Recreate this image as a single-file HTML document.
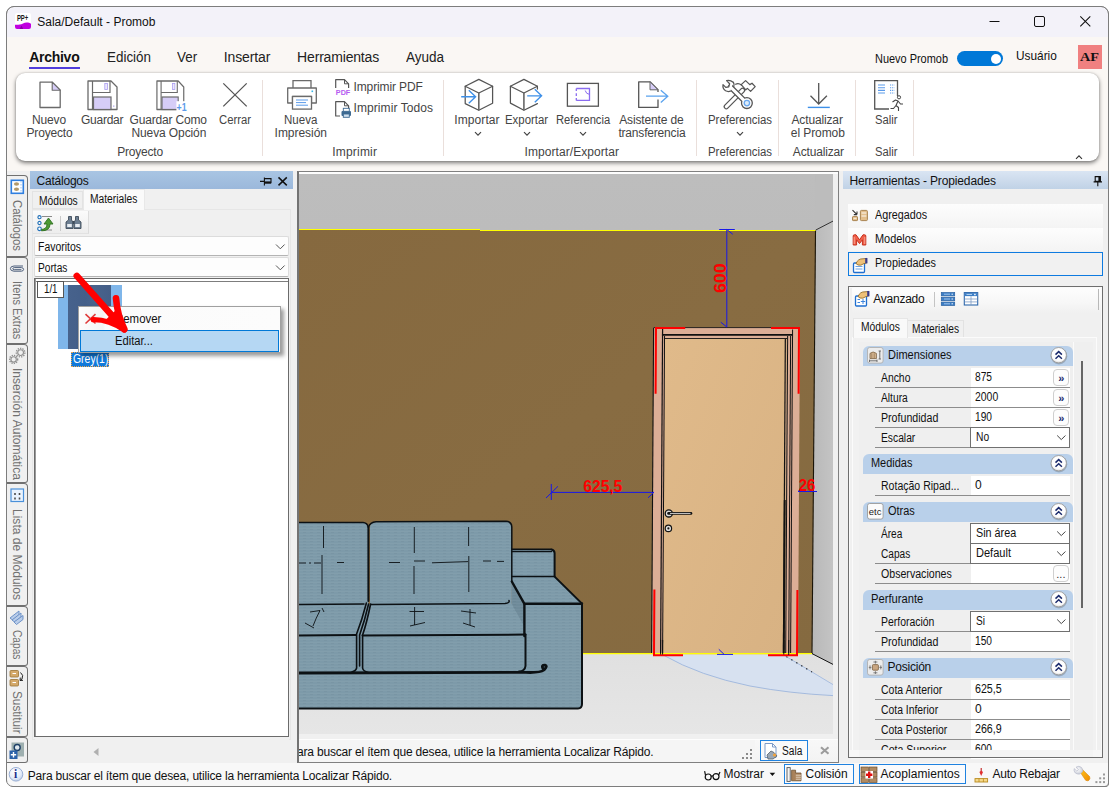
<!DOCTYPE html>
<html lang="es"><head><meta charset="utf-8"><title>Sala/Default - Promob</title>
<style>
html,body{margin:0;padding:0;background:#fff;}
body{width:1117px;height:797px;overflow:hidden;position:relative;font-family:"Liberation Sans",sans-serif;}
#app{position:absolute;left:0;top:0;width:1117px;height:797px;overflow:hidden;}
#app div,#app span.t,#app svg{position:absolute;box-sizing:border-box;}
span.t{white-space:pre;display:block;line-height:1;font-family:"Liberation Sans",sans-serif;font-weight:400;}

</style></head><body><div id="app">
<div id="win" style="left:6px;top:6px;width:1103px;height:781px;border:1px solid #7d7d7d;border-radius:8px 8px 2px 8px;background:#f0f0f0;overflow:hidden;"></div>
<div style="left:7px;top:7px;width:1101px;height:30px;background:#f3f2f9;border-radius:7px 7px 0 0;"></div>
<div style="left:7px;top:37px;width:1101px;height:134px;background:#faf7f4;"></div>
<svg style="left:15px;top:13px;" width="16" height="16" viewBox="0 0 16 16"><rect x="0" y="0" width="16" height="16" rx="2" fill="#fff"/><path d="M0 11.8 C3 12 5.5 11.6 8 10.4 C10.5 9.2 14 9.4 16 10.8 V14 Q16 16 14 16 H2 Q0 16 0 14 Z" fill="#c000e0"/><path d="M4.5 16L6.6 12.4L8.2 16Z" fill="#8a00a8"/><text x="1.9" y="8.2" font-family="Liberation Sans, sans-serif" font-weight="700" font-size="9" fill="#1a1a1a" textLength="11.4" lengthAdjust="spacingAndGlyphs">PP+</text></svg>
<span class="t" style="left:37.20px;top:16.44px;font-size:12px;color:#111;letter-spacing:0.012px;">Sala/Default - Promob</span>
<svg style="left:985px;top:10px;" width="110" height="22" viewBox="0 0 110 22"><path d="M4.5 11.5H14.5" stroke="#111" stroke-width="1" fill="none"/><rect x="49.5" y="6.5" width="10" height="10" rx="1.5" stroke="#111" stroke-width="1" fill="none"/><path d="M95.3 6.3L105.3 16.3M105.3 6.3L95.3 16.3" stroke="#111" stroke-width="1.05" fill="none"/></svg>
<span class="t" style="left:29.20px;top:50.15px;font-size:14px;color:#111;font-weight:700;letter-spacing:-0.271px;">Archivo</span>
<div style="left:29px;top:67px;width:51px;height:2px;background:#4f3ddc;"></div>
<span class="t" style="left:106.50px;top:50.15px;font-size:14px;color:#222;transform-origin:0 0;transform:scaleX(0.9582);">Edición</span>
<span class="t" style="left:177.20px;top:50.15px;font-size:14px;color:#222;transform-origin:0 0;transform:scaleX(0.9565);">Ver</span>
<span class="t" style="left:223.80px;top:50.15px;font-size:14px;color:#222;letter-spacing:-0.137px;">Insertar</span>
<span class="t" style="left:297.10px;top:50.15px;font-size:14px;color:#222;letter-spacing:-0.175px;">Herramientas</span>
<span class="t" style="left:406.20px;top:50.15px;font-size:14px;color:#222;transform-origin:0 0;transform:scaleX(0.9659);">Ayuda</span>
<span class="t" style="left:875.00px;top:52.84px;font-size:12px;color:#111;transform-origin:0 0;transform:scaleX(0.9120);">Nuevo Promob</span>
<div style="left:957px;top:51px;width:46px;height:15px;background:#0078d7;border-radius:8px;"></div>
<div style="left:990.5px;top:53.5px;width:10px;height:10px;background:#fff;border-radius:5px;"></div>
<span class="t" style="left:1015.50px;top:49.30px;font-size:13px;color:#111;transform-origin:0 0;transform:scaleX(0.9108);">Usuário</span>
<div style="left:1078px;top:45px;width:24px;height:24px;background:#f08080;"></div>
<span class="t" style="left:1080.30px;top:50.11px;font-size:13px;color:#111;font-weight:700;font-family:'Liberation Serif',serif;transform-origin:0 0;transform:scaleX(1.0964);">AF</span>
<div style="left:16px;top:73px;width:1083px;height:88px;background:#fff;border-radius:9px;box-shadow:0 2px 4px rgba(0,0,0,.5),0 0 2px rgba(0,0,0,.2);"></div>
<div style="left:262px;top:80px;width:1px;height:76px;background:#eadfdb;"></div>
<div style="left:443px;top:80px;width:1px;height:76px;background:#eadfdb;"></div>
<div style="left:696px;top:80px;width:1px;height:76px;background:#eadfdb;"></div>
<div style="left:778px;top:80px;width:1px;height:76px;background:#eadfdb;"></div>
<div style="left:855px;top:80px;width:1px;height:76px;background:#eadfdb;"></div>
<div style="left:913px;top:80px;width:1px;height:76px;background:#eadfdb;"></div>
<span class="t" style="left:31.90px;top:113.54px;font-size:12px;color:#444;letter-spacing:-0.122px;">Nuevo</span>
<span class="t" style="left:26.50px;top:126.74px;font-size:12px;color:#444;letter-spacing:-0.165px;">Proyecto</span>
<span class="t" style="left:81.00px;top:113.54px;font-size:12px;color:#444;letter-spacing:-0.254px;">Guardar</span>
<span class="t" style="left:129.50px;top:113.54px;font-size:12px;color:#444;letter-spacing:-0.170px;">Guardar Como</span>
<span class="t" style="left:131.50px;top:126.74px;font-size:12px;color:#444;letter-spacing:-0.113px;">Nueva Opción</span>
<span class="t" style="left:219.20px;top:113.54px;font-size:12px;color:#444;transform-origin:0 0;transform:scaleX(0.9411);">Cerrar</span>
<span class="t" style="left:117.20px;top:146.24px;font-size:12px;color:#444;letter-spacing:-0.194px;">Proyecto</span>
<svg style="left:36px;top:78px;" width="28" height="34" viewBox="0 0 28 34"><path d="M4 4.2H16.2L24.2 12.2V29.5H4Z" fill="#fff" stroke="#6a6a6a" stroke-width="1.3" stroke-linejoin="round"/><path d="M16.2 4.2V12.2H24.2Z" fill="#d6cdf7" stroke="#6a6a6a" stroke-width="1.1" stroke-linejoin="round"/></svg>
<svg style="left:87px;top:80px;" width="32" height="32" viewBox="0 0 32 32"><path d="M1 1H24L30 7V29.5H1Z" fill="#fff" stroke="#6a6a6a" stroke-width="1.3" stroke-linejoin="round"/><path d="M5.5 1V29.5" stroke="#6a6a6a" stroke-width="1.2"/><path d="M5.5 12.5H23V1" fill="none" stroke="#6a6a6a" stroke-width="1.2"/><rect x="6.5" y="17" width="17.5" height="12.5" fill="#d6cdf7" stroke="#6a6a6a" stroke-width="1.2"/><rect x="17.8" y="3.5" width="2.6" height="6" fill="#ece8fb" stroke="#a99cf0" stroke-width=".8"/><rect x="26.3" y="25.6" width="1" height="1" fill="#7a6be0"/></svg>
<svg style="left:155.6px;top:80px;" width="34" height="32" viewBox="0 0 34 32"><g transform="scale(0.925,1)"><path d="M1 1H24L30 7V29.5H1Z" fill="#fff" stroke="#6a6a6a" stroke-width="1.3" stroke-linejoin="round"/><path d="M5.5 1V29.5" stroke="#6a6a6a" stroke-width="1.2"/><path d="M5.5 12.5H23V1" fill="none" stroke="#6a6a6a" stroke-width="1.2"/><rect x="6.5" y="17" width="17.5" height="12.5" fill="#d6cdf7" stroke="#6a6a6a" stroke-width="1.2"/><rect x="17.8" y="3.5" width="2.6" height="6" fill="#ece8fb" stroke="#a99cf0" stroke-width=".8"/></g><rect x="20.4" y="21.2" width="12" height="11" fill="#fff"/><text x="20.6" y="30.6" font-family="Liberation Sans, sans-serif" font-size="10" font-weight="700" fill="#5b9bea" textLength="10" lengthAdjust="spacingAndGlyphs">+1</text></svg>
<svg style="left:221px;top:81px;" width="28" height="28" viewBox="0 0 28 28"><path d="M2.3 2.4L25.7 25.4M25.7 2.4L2.3 25.4" stroke="#555" stroke-width="1.3" fill="none"/></svg>
<span class="t" style="left:283.50px;top:113.54px;font-size:12px;color:#444;transform-origin:0 0;transform:scaleX(0.9600);">Nueva</span>
<span class="t" style="left:274.60px;top:126.74px;font-size:12px;color:#444;letter-spacing:-0.036px;">Impresión</span>
<span class="t" style="left:353.50px;top:80.54px;font-size:12px;color:#444;letter-spacing:-0.124px;">Imprimir PDF</span>
<span class="t" style="left:353.50px;top:102.14px;font-size:12px;color:#444;letter-spacing:0.080px;">Imprimir Todos</span>
<span class="t" style="left:332.20px;top:146.24px;font-size:12px;color:#444;letter-spacing:0.211px;">Imprimir</span>
<svg style="left:286px;top:79px;" width="32" height="32" viewBox="0 0 32 32"><path d="M7 9V1.7H25V9" fill="#fff" stroke="#6a6a6a" stroke-width="1.3"/><path d="M1.7 9H30.3V24H25.5V17.5H6.5V24H1.7Z" fill="#fff" stroke="#6a6a6a" stroke-width="1.3" stroke-linejoin="round"/><rect x="6.5" y="17.5" width="19" height="12.6" fill="#fff" stroke="#6a6a6a" stroke-width="1.3"/><path d="M10 21H22M10 23.6H20M10 26.2H22" stroke="#5b9bea" stroke-width="1"/><rect x="25.5" y="11.5" width="1.6" height="1.6" fill="#35b5e8"/></svg>
<svg style="left:334px;top:78px;" width="18" height="18" viewBox="0 0 18 18"><path d="M1.7 10V1.7H10.5L14.6 5.8V10" fill="#fff" stroke="#555" stroke-width="1.2" stroke-linejoin="round"/><path d="M10.5 1.7V5.8H14.6" fill="none" stroke="#555" stroke-width="1"/><text x="1.8" y="17.2" font-family="Liberation Sans, sans-serif" font-size="7.8" font-weight="700" fill="#b45cf0" textLength="14.5" lengthAdjust="spacingAndGlyphs">PDF</text></svg>
<svg style="left:334px;top:100px;" width="18" height="18" viewBox="0 0 18 18"><path d="M6 16H1.7V1.7H10.5L14.6 5.8V9" fill="#fff" stroke="#555" stroke-width="1.2" stroke-linejoin="round"/><path d="M10.5 1.7V5.8H14.6" fill="none" stroke="#555" stroke-width="1"/><rect x="7.5" y="11" width="9.5" height="5" rx="1" fill="#3d6a92"/><rect x="9.3" y="8.3" width="6" height="3" fill="#fff" stroke="#3d6a92" stroke-width=".9"/><rect x="9.3" y="14" width="6" height="3.3" fill="#cfe0ef" stroke="#3d6a92" stroke-width=".9"/></svg>
<span class="t" style="left:454.30px;top:114.04px;font-size:12px;color:#444;letter-spacing:0.089px;">Importar</span>
<span class="t" style="left:504.70px;top:114.04px;font-size:12px;color:#444;transform-origin:0 0;transform:scaleX(0.9503);">Exportar</span>
<span class="t" style="left:555.80px;top:114.04px;font-size:12px;color:#444;transform-origin:0 0;transform:scaleX(0.9340);">Referencia</span>
<span class="t" style="left:619.20px;top:114.04px;font-size:12px;color:#444;letter-spacing:-0.149px;">Asistente de</span>
<span class="t" style="left:618.40px;top:126.74px;font-size:12px;color:#444;letter-spacing:-0.181px;">transferencia</span>
<span class="t" style="left:524.50px;top:146.24px;font-size:12px;color:#444;letter-spacing:0.071px;">Importar/Exportar</span>
<svg style="left:473.6px;top:131px;" width="8" height="6" viewBox="0 0 8 6"><path d="M1 1.2L4 4.2L7 1.2" fill="none" stroke="#444" stroke-width="1.2"/></svg>
<svg style="left:522.5px;top:131px;" width="8" height="6" viewBox="0 0 8 6"><path d="M1 1.2L4 4.2L7 1.2" fill="none" stroke="#444" stroke-width="1.2"/></svg>
<svg style="left:579.4px;top:131px;" width="8" height="6" viewBox="0 0 8 6"><path d="M1 1.2L4 4.2L7 1.2" fill="none" stroke="#444" stroke-width="1.2"/></svg>
<svg style="left:735.6px;top:131px;" width="8" height="6" viewBox="0 0 8 6"><path d="M1 1.2L4 4.2L7 1.2" fill="none" stroke="#444" stroke-width="1.2"/></svg>
<svg style="left:458px;top:76px;" width="40" height="38" viewBox="458 76 40 38"><path d="M478.8 79.4L492.6 86.2V103.2L478.8 110.3L465.2 103.6V86.2Z" fill="none" stroke="#555" stroke-width="1.25" stroke-linejoin="round" stroke-linecap="round"/><path d="M465.2 86.2L478.8 93L492.6 86.2" fill="none" stroke="#555" stroke-width="1.25" stroke-linejoin="round" stroke-linecap="round"/><path d="M478.8 93V110.3" fill="none" stroke="#666" stroke-width="1.6"/><path d="M461.2 96.7H475.2M468.8 90.2L475.6 96.7L468.8 103.2" fill="none" stroke="#3d8fe8" stroke-width="1.35"/></svg>
<svg style="left:506px;top:76px;" width="40" height="38" viewBox="506 76 40 38"><path d="M537.4 89V86.2L523.9 79.4L510.4 86.2V103.1L523.9 110.3L537.4 103.6" fill="none" stroke="#555" stroke-width="1.25" stroke-linejoin="round" stroke-linecap="round"/><path d="M510.4 86.2L523.9 93L537.4 86.2" fill="none" stroke="#555" stroke-width="1.25" stroke-linejoin="round" stroke-linecap="round"/><path d="M523.9 93V110.3" fill="none" stroke="#666" stroke-width="1.6"/><path d="M527.2 95.8H541.2M534.8 89.3L541.6 95.8L534.8 102.3" fill="none" stroke="#3d8fe8" stroke-width="1.35"/></svg>
<svg style="left:566px;top:82px;" width="34" height="26" viewBox="566 82 34 26"><rect x="567.4" y="83.4" width="31" height="22.8" fill="#fff" stroke="#555" stroke-width="1.3"/><path d="M576.3 88.5H589.5V100.4H576.3" fill="none" stroke="#8a6cf0" stroke-width="1.3"/><path d="M576.3 88.5V100.4" fill="none" stroke="#8a6cf0" stroke-width="1.3" stroke-dasharray="2.6 2.2"/><path d="M585.2 90.5Q586 94 589.5 94.4" fill="none" stroke="#8a6cf0" stroke-width="1"/></svg>
<svg style="left:636px;top:78px;" width="34" height="32" viewBox="636 78 34 32"><path d="M658 99.6V107.4H638.7V81.8H650L658 89.8V92" fill="#fff" stroke="#555" stroke-width="1.3" stroke-linejoin="round"/><path d="M650 81.8V89.8H658Z" fill="#d6cdf7" stroke="#666" stroke-width="1" stroke-linejoin="round"/><path d="M646 96.2H667.4M660.8 90.2L667.8 96.2L660.8 102.6" fill="none" stroke="#5ba3ee" stroke-width="1.3"/></svg>
<span class="t" style="left:707.50px;top:114.04px;font-size:12px;color:#444;transform-origin:0 0;transform:scaleX(0.9500);">Preferencias</span>
<span class="t" style="left:707.50px;top:146.24px;font-size:12px;color:#444;transform-origin:0 0;transform:scaleX(0.9500);">Preferencias</span>
<svg style="left:720px;top:76px;" width="38" height="36" viewBox="720 76 38 36"><g fill="none" stroke-linecap="round" stroke-linejoin="round">
<path d="M726.3 106.6L742.5 90.4" stroke="#555" stroke-width="5.4"/><path d="M726.3 106.6L742.5 90.4" stroke="#fff" stroke-width="2.9"/>
<path d="M741.2 84.6L745.6 80.6L749.8 84.6L752 83.2L755.2 86.6L750.6 91.4L747.4 88.4L745.8 89.8Z" fill="#fff" stroke="#555" stroke-width="1.25"/>
<path d="M741.4 85Q738.6 82.6 735.6 84.2" stroke="#555" stroke-width="1.25"/>
<path d="M730.5 87L746 102.4" stroke="#555" stroke-width="5.6"/>
<circle cx="746.9" cy="103.1" r="5.4" fill="#fff" stroke="#555" stroke-width="1.3"/>
<path d="M730.5 87L745 101.4" stroke="#fff" stroke-width="3.1"/>
<path d="M733.2 82.2Q730 79.6 726.6 80.6L729.6 83.8L728.8 86.8L725.8 87.4L723 84.6Q722.4 88.6 725.6 90.8Q728 92 730.4 91.2" fill="#fff" stroke="#555" stroke-width="1.25"/>
<path d="M733.4 82.4Q734.6 84.4 733.8 86.4" stroke="#555" stroke-width="1.25"/>
<circle cx="746.9" cy="103.1" r="2.7" fill="#dcecfb" stroke="#6aa8ee" stroke-width="1.3"/>
</g></svg>
<span class="t" style="left:791.50px;top:114.04px;font-size:12px;color:#444;letter-spacing:-0.143px;">Actualizar</span>
<span class="t" style="left:790.80px;top:126.74px;font-size:12px;color:#444;letter-spacing:-0.074px;">el Promob</span>
<span class="t" style="left:792.80px;top:146.24px;font-size:12px;color:#444;letter-spacing:-0.154px;">Actualizar</span>
<svg style="left:805px;top:81px;" width="28" height="28" viewBox="0 0 28 28"><path d="M13.7 2V23M5.5 14.8L13.7 23L21.9 14.8" fill="none" stroke="#555" stroke-width="1.3"/><path d="M2.8 26.4H24.8" stroke="#3d8fe8" stroke-width="1.4"/></svg>
<span class="t" style="left:875.00px;top:114.04px;font-size:12px;color:#444;transform-origin:0 0;transform:scaleX(0.9373);">Salir</span>
<span class="t" style="left:875.00px;top:146.24px;font-size:12px;color:#444;transform-origin:0 0;transform:scaleX(0.9373);">Salir</span>
<svg style="left:873px;top:79px;" width="31" height="33" viewBox="0 0 31 33"><path d="M24.5 17V1.7H1.7V30H16" fill="#fff" stroke="#555" stroke-width="1.3"/>
<path d="M5 6H12M5 8.7H12M5 11.4H12M5 14H12" stroke="#5b9bea" stroke-width="1.1"/>
<path d="M17 6H21.5M17 8.7H21.5M17 11.4H21.5M17 14H21.5" stroke="#5b9bea" stroke-width="1.1" stroke-dasharray="1.2 0.9"/>
<circle cx="26" cy="18.3" r="1.6" fill="#fff" stroke="#444" stroke-width="1"/>
<path d="M19.5 23L22.5 21L25 22L27.5 25H30M25 22L23 26.5L25.5 28.5V32M23 26.5L20.5 29.5H17.5" fill="none" stroke="#444" stroke-width="1.1" stroke-linejoin="round"/></svg>
<svg style="left:1075px;top:154px;" width="8" height="6" viewBox="0 0 8 6"><path d="M1 4.8L4 1.8L7 4.8" fill="none" stroke="#333" stroke-width="1.1"/></svg>
<div style="left:7px;top:171px;width:287px;height:592px;background:#f0f0f0;"></div>
<div style="left:6px;top:175px;width:22px;height:82px;background:#f0f0f0;border:1px solid #707070;border-radius:0 4px 3px 0;border-left:none;"></div>
<span class="t" style="left:23.46px;top:199.80px;font-size:12px;color:#707070;transform-origin:0 0;transform:rotate(90deg) scaleX(0.9438);">Catálogos</span>
<div style="left:6px;top:257px;width:22px;height:87px;background:#f0f0f0;border:1px solid #707070;border-radius:0 4px 3px 0;border-left:none;"></div>
<span class="t" style="left:23.46px;top:281.20px;font-size:12px;color:#707070;transform-origin:0 0;transform:rotate(90deg) scaleX(0.9186);">Itens Extras</span>
<div style="left:6px;top:344px;width:22px;height:139px;background:#f0f0f0;border:1px solid #707070;border-radius:0 4px 3px 0;border-left:none;"></div>
<span class="t" style="left:23.46px;top:367.50px;font-size:12px;color:#707070;transform-origin:0 0;transform:rotate(90deg) scaleX(1.0054);">Inserción Automática</span>
<div style="left:6px;top:483px;width:22px;height:123px;background:#f0f0f0;border:1px solid #707070;border-radius:0 4px 3px 0;border-left:none;"></div>
<span class="t" style="left:23.46px;top:509.30px;font-size:12px;color:#707070;transform-origin:0 0;transform:rotate(90deg) scaleX(1.0031);">Lista de Módulos</span>
<div style="left:6px;top:606px;width:22px;height:60px;background:#f0f0f0;border:1px solid #707070;border-radius:0 4px 3px 0;border-left:none;"></div>
<span class="t" style="left:23.46px;top:629.80px;font-size:12px;color:#707070;transform-origin:0 0;transform:rotate(90deg) scaleX(0.8476);">Capas</span>
<div style="left:6px;top:666px;width:22px;height:71px;background:#f0f0f0;border:1px solid #707070;border-radius:0 4px 3px 0;border-left:none;"></div>
<span class="t" style="left:23.46px;top:690.80px;font-size:12px;color:#707070;transform-origin:0 0;transform:rotate(90deg) scaleX(0.9827);">Sustituir</span>
<div style="left:6px;top:737px;width:22px;height:26px;background:#f0f0f0;border:1px solid #707070;border-radius:0 4px 3px 0;border-left:none;"></div>
<svg style="left:10px;top:179px;" width="15" height="16" viewBox="0 0 15 16"><rect x="1.3" y="1.3" width="12" height="13" fill="#fff" stroke="#2f7fe0" stroke-width="1.6"/><ellipse cx="6.5" cy="5" rx="2.6" ry="1.7" fill="#b49a6a"/><ellipse cx="6.5" cy="10.3" rx="2.6" ry="1.7" fill="#b49a6a"/><path d="M11 2V14" stroke="#9cc4f3" stroke-width="1" stroke-dasharray="1.5 1.5"/></svg>
<svg style="left:9px;top:262px;" width="17" height="13" viewBox="9 262 17 13"><g fill="none" stroke="#4d5f7c" stroke-width="1" stroke-linecap="round"><path d="M22.6 266H14Q10.4 266.2 10.4 268.6Q10.4 271 14 271.2H21.4Q23.6 271 23.6 269.4Q23.6 267.8 21.4 267.6H14.2Q12.8 267.8 12.8 268.7Q12.8 269.6 14.2 269.7H21"/></g></svg>
<svg style="left:9px;top:347px;" width="17" height="20" viewBox="9 347 17 20"><g fill="none" stroke="#8f8f8f"><circle cx="20.6" cy="352.6" r="2.9" stroke-width="1.1"/><circle cx="20.6" cy="352.6" r="4.3" stroke-width="1.3" stroke-dasharray="1.3 1.1"/><circle cx="13.6" cy="359.4" r="2.7" stroke-width="1.1"/><circle cx="13.6" cy="359.4" r="4.1" stroke-width="1.3" stroke-dasharray="1.3 1.1"/></g></svg>
<svg style="left:10px;top:488px;" width="15" height="15" viewBox="0 0 15 15"><rect x="1" y="1" width="12.5" height="12.5" fill="#eaf3fd" stroke="#4a90d9" stroke-width="1.2"/><path d="M5 5V7M9.5 5V7M5 9.5V11.5M9.5 9.5V11.5" stroke="#4b4b4b" stroke-width="1.6"/></svg>
<svg style="left:9px;top:609px;" width="17" height="18" viewBox="0 0 17 18"><g stroke="#6f93c8" stroke-width="1" fill="#b9cdea"><path d="M1 9L10 2V6L3.5 11Z"/><path d="M3 11L12 4V8L5.5 13Z"/><path d="M5 13L14 6.5V10.5L7.5 15.5Z"/></g></svg>
<svg style="left:9px;top:669px;" width="17" height="21" viewBox="0 0 17 21"><g fill="#d4a96a" stroke="#9a7436" stroke-width=".8"><rect x="1" y="1.5" width="8.5" height="6.5" rx="1"/><rect x="1" y="10.5" width="8.5" height="6.5" rx="1"/></g><path d="M3.5 4.5H7M3.5 13.5H7" stroke="#fff" stroke-width="1"/><path d="M11.5 3.5Q15 6 13 10L11 11.5M11 11.5L11.3 8.6M11 11.5L14 11.3" fill="none" stroke="#222" stroke-width="1"/></svg>
<svg style="left:9px;top:741px;" width="16" height="20" viewBox="0 0 16 20"><rect x="2.5" y="1.5" width="12.5" height="14" fill="#9fb0b0"/><circle cx="8.2" cy="6.5" r="3" fill="#dfe8ee" stroke="#1d3f66" stroke-width="1.4"/><rect x="0.5" y="9.5" width="8" height="8.5" fill="#2c62a8"/><path d="M4.5 11V16.5M1.8 13.8H7.2" stroke="#fff" stroke-width="1.4"/></svg>
<div style="left:30px;top:171px;width:263px;height:18px;background:linear-gradient(#a9c5e3,#9bb8db);"></div>
<span class="t" style="left:36.60px;top:175.24px;font-size:12px;color:#111;letter-spacing:-0.229px;">Catálogos</span>
<svg style="left:259px;top:176px;" width="14" height="11" viewBox="0 0 14 11"><path d="M1 5.4H5.4M5.4 1.5V9.4M5.4 2.6H12V6.8H5.4" fill="none" stroke="#111" stroke-width="1.1"/><rect x="5.4" y="5.4" width="6.6" height="2.2" fill="#111"/></svg>
<svg style="left:277px;top:176px;" width="12" height="11" viewBox="0 0 12 11"><path d="M1.5 1.4L9.8 9.4M9.8 1.4L1.5 9.4" stroke="#111" stroke-width="1.5" fill="none"/></svg>
<div style="left:32px;top:191px;width:51px;height:18px;background:#f0f0f0;border:1px solid #e3e3e3;"></div>
<span class="t" style="left:38.60px;top:194.84px;font-size:12px;color:#111;transform-origin:0 0;transform:scaleX(0.8532);">Módulos</span>
<div style="left:83px;top:189px;width:62px;height:21px;background:#fafafa;border:1px solid #e8e8e8;border-bottom:none;"></div>
<span class="t" style="left:90.30px;top:192.84px;font-size:12px;color:#111;transform-origin:0 0;transform:scaleX(0.8545);">Materiales</span>
<div style="left:32px;top:209px;width:259px;height:531px;background:#f0f0f0;border:1px solid #e6e6e6;"></div>
<div style="left:84px;top:209px;width:60px;height:1px;background:#fafafa;"></div>
<div style="left:33px;top:211px;width:56px;height:23px;background:linear-gradient(#fbfbfb,#ededed);border-right:1px solid #dcdcdc;border-bottom:1px solid #e2e2e2;"></div>
<svg style="left:37px;top:214px;" width="17" height="18" viewBox="0 0 17 18"><path d="M5 2.5H15M5 16H15" stroke="#8a8a8a" stroke-width="1"/><g fill="#fff" stroke="#1f6fb8" stroke-width="1.1"><circle cx="2.5" cy="3.2" r="1.6"/><circle cx="2.5" cy="9" r="1.6"/><circle cx="2.5" cy="14.8" r="1.8"/></g><path d="M4.5 15.5Q10 15 10 10H7L11.5 4L16 10H13Q13 17 4.5 16.8Z" fill="#4c9a33" stroke="#2f7020" stroke-width=".9"/></svg>
<div style="left:60px;top:216px;width:1px;height:15px;background:#c9c9c9;"></div>
<svg style="left:65px;top:215px;" width="17" height="15" viewBox="0 0 17 15"><g fill="#6d7f92" stroke="#3f4c5a" stroke-width=".9"><path d="M3.5 1.5H6.5V5L8 7V13.5H1V7L3.5 5Z"/><path d="M10.5 1.5H13.5V5L16 7V13.5H9V7L10.5 5Z"/></g><rect x="2.2" y="9" width="4.6" height="3" fill="#e9eef3"/><rect x="10.2" y="9" width="4.6" height="3" fill="#e9eef3"/><rect x="7.6" y="6" width="1.8" height="3" fill="#3f4c5a"/></svg>
<div style="left:34px;top:236px;width:255px;height:20px;background:#fdfdfd;border:1px solid #dcdcdc;border-radius:2px;border-bottom-color:#b4b4b4;"></div>
<span class="t" style="left:38.40px;top:241.04px;font-size:12px;color:#111;transform-origin:0 0;transform:scaleX(0.8714);">Favoritos</span>
<svg style="left:275px;top:243px;" width="11" height="8" viewBox="0 0 11 8"><path d="M1 1.5L5.3 5.8L9.6 1.5" fill="none" stroke="#555" stroke-width="1"/></svg>
<div style="left:34px;top:257px;width:255px;height:20px;background:#fdfdfd;border:1px solid #dcdcdc;border-radius:2px;border-bottom-color:#b4b4b4;"></div>
<span class="t" style="left:38.40px;top:262.04px;font-size:12px;color:#111;transform-origin:0 0;transform:scaleX(0.8477);">Portas</span>
<svg style="left:275px;top:264px;" width="11" height="8" viewBox="0 0 11 8"><path d="M1 1.5L5.3 5.8L9.6 1.5" fill="none" stroke="#555" stroke-width="1"/></svg>
<div style="left:34px;top:278px;width:255px;height:459px;background:#fff;border:1px solid #6b6b6b;"></div>
<div style="left:35px;top:279px;width:1px;height:457px;background:#9a9a9a;"></div>
<div style="left:36px;top:281px;width:252px;height:1px;background:#7d7d7d;"></div>
<div style="left:58px;top:285px;width:64px;height:64px;background:#7fb6ea;"></div>
<div style="left:68px;top:285px;width:43px;height:64px;background:linear-gradient(90deg,#47628c,#445f89 40%,#48638d 60%,#445e87);"></div>
<div style="left:37px;top:281px;width:27px;height:17px;background:#fff;border:1px solid #555;"></div>
<span class="t" style="left:43.80px;top:283.04px;font-size:12px;color:#111;transform-origin:0 0;transform:scaleX(0.8093);">1/1</span>
<div style="left:71px;top:352px;width:38px;height:15px;background:#1179da;outline:1px dotted #f0a850;outline-offset:-1px;"></div>
<span class="t" style="left:72.60px;top:353.04px;font-size:12px;color:#fff;transform-origin:0 0;transform:scaleX(0.8704);">Grey(1)</span>
<div style="left:35px;top:738px;width:254px;height:22px;background:#f0f0f0;"></div>
<svg style="left:92px;top:747px;" width="8" height="10" viewBox="0 0 8 10"><path d="M6.5 1L1.5 5L6.5 9Z" fill="#b0b0b0"/></svg>
<div style="left:78px;top:306px;width:203px;height:47px;background:#f6f6f6;border:1px solid #a0a0a0;box-shadow:3px 3px 4px rgba(0,0,0,.4);"></div>
<div style="left:79px;top:307px;width:201px;height:23px;background:linear-gradient(90deg,#fdfdfd,#f4f4f4 12%,#fbfbfb 13%,#fcfcfc);"></div>
<svg style="left:84px;top:313px;" width="14" height="12" viewBox="0 0 14 12"><path d="M1.5 1.2L11.5 10.5M11.5 1.2L1.5 10.5" stroke="#e03a3a" stroke-width="1.6" fill="none"/></svg>
<span class="t" style="left:114.60px;top:312.64px;font-size:12px;color:#111;transform-origin:0 0;transform:scaleX(0.9532);">Remover</span>
<div style="left:80px;top:330px;width:199px;height:22px;background:#b5d7f3;border:1px solid #0078d7;"></div>
<span class="t" style="left:114.50px;top:335.04px;font-size:12px;color:#111;transform-origin:0 0;transform:scaleX(0.9315);">Editar...</span>
<svg style="left:60px;top:265px;" width="80" height="75" viewBox="60 265 80 75"><g fill="none" stroke="#ff0000" stroke-linecap="round" stroke-linejoin="round"><path d="M76.8 275.9L121.5 326.2" stroke-width="6.6"/><path d="M116 298.2Q117.3 315 124.4 329.3" stroke-width="6.6"/><path d="M93.2 319.6Q109 319.4 124.4 330" stroke-width="5.2"/><path d="M106 320.5L117 310L125.6 331.6Z" fill="#ff0000" stroke-width="1.5"/></g></svg>
<div style="left:294px;top:171px;width:4px;height:592px;background:#f0f0f0;"></div>
<div style="left:297px;top:171px;width:542px;height:592px;background:#f0f0f0;border:1px solid #808080;border-left:2px solid #737373;"></div>
<div style="left:299px;top:172px;width:539px;height:2px;background:#fdfdfd;"></div>
<svg style="left:299px;top:173px;" width="534" height="561" viewBox="299 173 534 561"><defs><linearGradient id="gceil" x1="0" y1="0" x2="0" y2="1"><stop offset="0" stop-color="#bdbdbd"/><stop offset="1" stop-color="#bcbcbc"/></linearGradient><linearGradient id="gwall" x1="0" y1="0" x2="1" y2="1"><stop offset="0" stop-color="#86693f"/><stop offset="0.5" stop-color="#886c42"/><stop offset="1" stop-color="#856a40"/></linearGradient><linearGradient id="gside" x1="0" y1="0" x2="1" y2="0"><stop offset="0" stop-color="#b8b8b8"/><stop offset="1" stop-color="#c4c4c4"/></linearGradient><linearGradient id="gdoor" x1="0" y1="0" x2="1" y2="1"><stop offset="0" stop-color="#e0ba8a"/><stop offset="1" stop-color="#d8b283"/></linearGradient><linearGradient id="gfloor" x1="0" y1="0" x2="0" y2="1"><stop offset="0" stop-color="#e0e0e0"/><stop offset="1" stop-color="#e6e6e6"/></linearGradient><pattern id="ptex" width="7" height="3" patternUnits="userSpaceOnUse"><rect width="7" height="1" fill="#fff" opacity=".035"/><rect x="2" y="1" width="3" height="1" fill="#000" opacity=".03"/></pattern></defs><rect x="299" y="174" width="534" height="56" fill="url(#gceil)"/><path d="M299 230H816V654H299Z" fill="url(#gwall)"/><rect x="299" y="654" width="534" height="80" fill="url(#gfloor)"/><path d="M815.6 230L833 221V664.4L812 653.8Z" fill="url(#gside)"/><path d="M815.6 230L833 221V174H815Z" fill="#bcbcbc"/><path d="M815.8 230L833.2 221" stroke="#222" stroke-width="0.9" fill="none"/><path d="M815.5 230.5L812 654" stroke="#1a1408" stroke-width="1.1" fill="none"/><path d="M812 653.6L833 664.4" stroke="#111" stroke-width="1" fill="none"/><path d="M299 229.5H480M480 230.5H815.5" stroke="#ffff00" stroke-width="1.2" fill="none"/><path d="M663.5 655.2 Q700 676 750 686 Q790 693.5 833 695.6 V684.4 L784.6 655.2Z" fill="#d7e1f0"/><path d="M663.5 655.2 Q700 676 750 686 Q790 693.5 833 695.6" fill="none" stroke="#9db5dc" stroke-width="0.9"/><path d="M784.6 655.6L833 684.6" fill="none" stroke="#9db5dc" stroke-width="0.8"/><path d="M786.4 656.6L812 672" fill="none" stroke="#111" stroke-width="1.1" stroke-dasharray="1.2 4.6"/><g transform="matrix(1 0 -0.006116 1 2.0000 0)"><rect x="653.6" y="327.2" width="146.4" height="327" fill="#dcae96"/><rect x="665" y="339" width="120.4" height="315" fill="url(#gdoor)"/><rect x="786.2" y="339" width="1" height="315" fill="#cdaa80"/><path d="M653.5 327.6H800" stroke="#111" stroke-width="0.9" fill="none"/><path d="M653.6 328V654" stroke="#111" stroke-width="1.1" fill="none"/><path d="M662.6 328.5V654" stroke="#111" stroke-width="1.2" fill="none"/><path d="M664.6 336V654" stroke="#111" stroke-width="1" fill="none"/><path d="M662 334.9H792.8" stroke="#111" stroke-width="1.6" fill="none"/><path d="M664.6 338.5H787.6" stroke="#111" stroke-width="0.9" fill="none"/><path d="M785.4 339V654" stroke="#111" stroke-width="1.2" fill="none"/><path d="M785.8 500V654" stroke="#111" stroke-width="1.9" fill="none"/><path d="M787.7 336V654" stroke="#111" stroke-width="1" fill="none"/><path d="M790.7 336V654" stroke="#111" stroke-width="1" fill="none"/><path d="M792.6 329.5V654" stroke="#111" stroke-width="1" fill="none"/></g><path d="M582 653.6H812" stroke="#ffff00" stroke-width="1.3" fill="none"/><g transform="matrix(1 0 -0.006116 1 2.0000 0)"><path d="M656 393.8V328.1H685.2M771 328.1H799V393.8M656 589.6V655.2H685M770 655.2H799V590" stroke="#ff0000" stroke-width="2" fill="none"/><path d="M662.6 640V654.6M664.6 640V654.6M785.8 640V654.4M790.7 640V655" stroke="#111" stroke-width="1" fill="none"/></g><circle cx="668.8" cy="513.4" r="3.6" fill="#ddd" stroke="#111" stroke-width="1.3"/><path d="M668.5 513.4H691" stroke="#111" stroke-width="2.6" stroke-linecap="round"/><path d="M670 513.4H690.5" stroke="#e8e8e8" stroke-width="0.9"/><circle cx="668.4" cy="528.4" r="3.2" fill="#ddd" stroke="#111" stroke-width="1.2"/><circle cx="668.4" cy="528.4" r="1.1" fill="#111"/><path d="M726.8 229V327M719.2 229.5H734.8M726.8 229.5L732.8 234.3M720.8 322.2L726.8 327" stroke="#1818e8" stroke-width="1" fill="none"/><path d="M551.3 492.4H654M551.3 484V500M546 498L558 486.3M648 497.8L653.6 492.6" stroke="#1818e8" stroke-width="1" fill="none"/><path d="M798 491.5H817M798 491.5L803.5 486.5" stroke="#1818e8" stroke-width="1" fill="none"/><path d="M717 654.4H733M718.8 649.3L724 654.3" stroke="#1818e8" stroke-width="1" fill="none"/><text x="583.3" y="491.8" font-family="Liberation Sans, sans-serif" font-weight="700" font-size="16.3" fill="#ff0000" textLength="39" lengthAdjust="spacingAndGlyphs">625,5</text><text x="798.8" y="491" font-family="Liberation Sans, sans-serif" font-weight="700" font-size="16.3" fill="#ff0000" textLength="16.6" lengthAdjust="spacingAndGlyphs">26</text><text transform="translate(726,293) rotate(-90)" x="0" y="0" font-family="Liberation Sans, sans-serif" font-weight="700" font-size="16.3" fill="#ff0000" textLength="29.6" lengthAdjust="spacingAndGlyphs">600</text><path d="M299 522.6H363Q368 522.6 368.3 528V604H299Z" fill="#7d9aa9"/><path d="M370 527Q370.4 522 376 521.8L506 521.3Q511.6 521.5 511.8 527V604H370Z" fill="#7d9aa9"/><path d="M511.5 549H552Q554.6 549 554.6 552V577H511.5Z" fill="#7d9aa9"/><path d="M511.7 576.5H554.5L582 603.5V704Q582 708.4 578 708.4H299V604H511.7Z" fill="#7d9aa9"/><path d="M511.8 581.5L524 603.5V626L511.8 604Z" fill="#6f8b9a"/><path d="M299 522H511.8V549H554.6V576.5L582 603.5V708.4H299Z" fill="url(#ptex)"/><g fill="none" stroke="#0c1114" stroke-linejoin="round" stroke-linecap="round" stroke-width="1.5"><path d="M299 522.6H363Q367 522.8 368.3 527"/><path d="M368.5 527Q370 522.4 376 521.8L506 521.3Q511.6 521.5 511.8 527V581.5"/><path d="M512 549.2H551M512 551.4H551.5"/><path d="M512 576.6H554.6"/><path d="M299 604.4L364 604M371 604.4L505 603.6Q510 603 509 600.5"/></g><g fill="none" stroke="#0c1114" stroke-linejoin="round" stroke-linecap="round" stroke-width="2"><path d="M368.4 527V601"/><path d="M551.5 549.4Q554.4 550 554.6 553V576"/><path d="M554.6 576.6L582 603.6"/><path d="M299 635.4L356 635M362.5 635.4L525.5 634.6"/><path d="M525.5 634.6V666Q525 671 519 671.6"/><path d="M582 603.6V704Q582 708.4 578 708.4H299"/></g><g fill="none" stroke="#0c1114" stroke-linejoin="round" stroke-linecap="round" stroke-width="2.4"><path d="M524.4 603.8H582"/><path d="M511.8 581.5L524.4 603.8V636"/></g><g fill="none" stroke="#0c1114" stroke-linejoin="round" stroke-linecap="round" stroke-width="2.8"><path d="M299 673L526 672.4Q540 673 544 670Q548 666 545 665.2Q541 665 543 668.5"/></g><g fill="none" stroke="#0c1114" stroke-linejoin="round" stroke-linecap="round" stroke-width="1.6"><path d="M366.4 603Q362 620 356.6 634V668Q356 671 351 672.4"/><path d="M368.6 604Q364.6 621 359.6 635V666"/><path d="M370.6 604Q367 622 362.6 635V668Q363 671 368 672.4"/></g><g fill="none" stroke="#0c1114" stroke-width="0.9"><path d="M323.5 526V548M322 555V594" /><path d="M299 563H323M337 562.5H347" stroke-dasharray="7 3 2 3"/><path d="M414.3 527V553M414 566V594M468.6 527V546M468.8 556V592" /><path d="M389 562.5H400M414 561H425M432 562.8L468 561.6M483 561H491M497 561.4H504" /><path d="M414.6 607V625M409.5 611.5H424M410 626L425 622.5" /><path d="M470 609V625M461 611L476 613M463 623L475 627" /><path d="M310 612L320 610.5Q316 618 313 626M305 623L314 628M322 608L324 612" /></g></svg>
<div style="left:299px;top:739px;width:539px;height:1px;background:#fdfdfd;"></div>
<div style="left:755px;top:740px;width:83px;height:22px;background:linear-gradient(#f8f8f8,#f3f3f3);"></div>
<div style="left:299px;top:740px;width:456px;height:22px;background:#f5f5f5;overflow:hidden;">
<span class="t" style="left:-9.90px;top:5.54px;font-size:12px;color:#111;letter-spacing:-0.178px;">Para buscar el ítem que desea, utilice la herramienta Localizar Rápido.</span>
</div>
<svg style="left:742px;top:748px;" width="11" height="12" viewBox="0 0 11 12"><g fill="#8a8a8a"><rect x="8" y="1" width="2" height="2"/><rect x="8" y="5" width="2" height="2"/><rect x="4" y="5" width="2" height="2"/><rect x="8" y="9" width="2" height="2"/><rect x="4" y="9" width="2" height="2"/><rect x="0" y="9" width="2" height="2"/></g></svg>
<div style="left:760px;top:740px;width:48px;height:21px;background:#fafafa;border:1px solid #1f82e0;"></div>
<svg style="left:763px;top:742px;" width="16" height="18" viewBox="0 0 16 18"><path d="M2 1.5H9.5L13 5V15.5H2Z" fill="#fff" stroke="#7a9ac8" stroke-width="1"/><path d="M9.5 1.5V5H13" fill="none" stroke="#7a9ac8" stroke-width="1"/><path d="M4 13L8 9L11 10.5L14 14L10 17H5Z" fill="#9aa7b5" stroke="#56606b" stroke-width=".8"/><circle cx="11.5" cy="13" r="1.6" fill="#f2a23a"/></svg>
<span class="t" style="left:781.60px;top:744.54px;font-size:12px;color:#111;transform-origin:0 0;transform:scaleX(0.8452);">Sala</span>
<svg style="left:819px;top:746px;" width="11" height="10" viewBox="0 0 11 10"><path d="M2 1.2L9.5 7.8M9.5 1.2L2 7.8" stroke="#9c9c9c" stroke-width="2.1" fill="none"/></svg>
<div style="left:839px;top:171px;width:269px;height:592px;background:#f0f0f0;"></div>
<div style="left:843px;top:171px;width:265px;height:18px;background:linear-gradient(#dae5f3,#c0d2e6);"></div>
<span class="t" style="left:849.40px;top:174.54px;font-size:12px;color:#111;letter-spacing:-0.139px;">Herramientas - Propiedades</span>
<svg style="left:1093px;top:175px;" width="10" height="12" viewBox="0 0 10 12"><path d="M2.2 1.6H7.4V6.4H2.2Z" fill="none" stroke="#111" stroke-width="1.1"/><rect x="5.4" y="1.6" width="2.2" height="4.8" fill="#111"/><path d="M0.6 6.9H9M4.8 6.9V11.2" stroke="#111" stroke-width="1.1" fill="none"/></svg>
<div style="left:848px;top:204px;width:255px;height:23.6px;background:linear-gradient(#fdfdfd,#f4f4f4);"></div>
<div style="left:848px;top:228px;width:255px;height:23.4px;background:linear-gradient(#fdfdfd,#f4f4f4);"></div>
<div style="left:848px;top:252px;width:255px;height:24px;background:#f1f1f1;border:1px solid #0f7be0;"></div>
<span class="t" style="left:875.20px;top:209.04px;font-size:12px;color:#111;transform-origin:0 0;transform:scaleX(0.8976);">Agregados</span>
<span class="t" style="left:875.20px;top:233.14px;font-size:12px;color:#111;transform-origin:0 0;transform:scaleX(0.9105);">Modelos</span>
<span class="t" style="left:875.40px;top:256.74px;font-size:12px;color:#111;transform-origin:0 0;transform:scaleX(0.9053);">Propiedades</span>
<svg style="left:851px;top:209px;" width="18" height="13" viewBox="0 0 18 13"><path d="M1.5 1.2L6 5.6M6 5.6V2.4M6 5.6H2.8" fill="none" stroke="#333" stroke-width="1.1"/><g fill="#e3bf8c" stroke="#a17a45" stroke-width=".9"><rect x="1.5" y="7.6" width="5" height="4" rx=".6"/><rect x="9.4" y="1.4" width="7" height="10.2" rx="1"/></g><path d="M10.5 4H15.4M10.5 7H15.4" stroke="#fff" stroke-width=".9"/><path d="M2.5 9.3H5.5" stroke="#fff" stroke-width=".8"/></svg>
<svg style="left:851px;top:233px;" width="18" height="14" viewBox="0 0 18 14"><path d="M2.2 12V3Q2.2 1.8 3.4 1.8H5L8.5 6.8L12 1.8H13.6Q14.8 1.8 14.8 3V12H11.4V6.8L8.5 10.6L5.6 6.8V12Z" fill="#f0604a" stroke="#c8321e" stroke-width="1" stroke-linejoin="round"/><path d="M3.2 4V11M13.8 4V11" stroke="#fbb8a8" stroke-width=".8"/></svg>
<svg style="left:852px;top:257px;" width="17" height="17" viewBox="0 0 17 17"><rect x="1.5" y="6" width="11" height="9.5" rx="1" fill="#fff" stroke="#1f6fd0" stroke-width="1.3"/><path d="M3.5 9.5H10.5M3.5 12H10.5" stroke="#6fa4e4" stroke-width="1"/><path d="M4 6.5Q6 1.5 11 1.8L14.6 1.4V6L11.5 6.8Q9 9 6 8Z" fill="#eec078" stroke="#8a6420" stroke-width=".8"/><rect x="13.2" y="1" width="2.2" height="5.4" fill="#3a3a8a"/></svg>
<div style="left:848px;top:286px;width:255px;height:472px;background:#f0f0f0;border:1px solid #6e6e6e;"></div>
<div style="left:849px;top:287px;width:253px;height:470px;border:1px solid #fafafa;"></div>
<div style="left:852px;top:288px;width:249px;height:25px;background:linear-gradient(#fdfdfd,#f7f7f7 60%,#f0f0f0);"></div>
<div style="left:1098px;top:289px;width:1px;height:21px;background:#b8b8b8;"></div>
<svg style="left:854px;top:290px;" width="17" height="17" viewBox="0 0 17 17"><rect x="1.5" y="6" width="11" height="10" rx="1" fill="#fff" stroke="#1f6fd0" stroke-width="1.3"/><path d="M3.5 9.5H6M3.5 12.5H6M9 9V14M6.8 11.5H11.2" stroke="#3f86dd" stroke-width="1"/><path d="M4 6.5Q6 1.5 11 1.8L14.6 1.4V6L11.5 6.8Q9 9 6 8Z" fill="#eec078" stroke="#8a6420" stroke-width=".8"/><rect x="13.2" y="1" width="2.2" height="5.4" fill="#3a3a8a"/></svg>
<span class="t" style="left:873.30px;top:292.64px;font-size:12px;color:#111;letter-spacing:-0.251px;">Avanzado</span>
<div style="left:934px;top:292px;width:1px;height:15px;background:#c4c4c4;"></div>
<svg style="left:940px;top:291px;" width="16" height="16" viewBox="0 0 16 16"><g fill="#3c7ec6" stroke="#2b62a0" stroke-width=".7"><rect x="1.3" y="1.5" width="13.4" height="3.4"/><rect x="1.3" y="6.3" width="13.4" height="3.4"/><rect x="1.3" y="11.1" width="13.4" height="3.4"/></g><path d="M4 3.2H10M4 8H10M4 12.8H10" stroke="#a8cbee" stroke-width=".9"/><path d="M11.5 3.2H13M11.5 8H13M11.5 12.8H13" stroke="#fff" stroke-width=".9"/></svg>
<svg style="left:963px;top:291px;" width="16" height="16" viewBox="0 0 16 16"><rect x="1.3" y="1.6" width="13.4" height="12.4" fill="#fff" stroke="#2f68ac" stroke-width="1.1"/><rect x="1.8" y="2.1" width="12.4" height="3" fill="#3c7ec6"/><path d="M1.8 8H14.2M1.8 10.9H14.2M8 5.2V14" stroke="#7d9cc4" stroke-width=".8"/><path d="M3.5 3.5H9" stroke="#b9d6f2" stroke-width=".9"/><rect x="11" y="2.8" width="1.8" height="1.4" fill="#dbe9f8"/></svg>
<div style="left:907px;top:319.5px;width:57px;height:18px;background:#f0f0f0;border:1px solid #e2e2e2;"></div>
<span class="t" style="left:912.20px;top:322.84px;font-size:12px;color:#111;transform-origin:0 0;transform:scaleX(0.8491);">Materiales</span>
<div style="left:852px;top:336.5px;width:245px;height:416px;background:#f1f1f1;border:1px solid #fbfbfb;"></div>
<div style="left:852.5px;top:317.5px;width:55px;height:20.5px;background:#f9f9f9;border:1px solid #e6e6e6;border-bottom:none;"></div>
<span class="t" style="left:860.50px;top:321.34px;font-size:12px;color:#111;transform-origin:0 0;transform:scaleX(0.8576);">Módulos</span>
<div style="left:859px;top:342px;width:234px;height:408px;background:#efefef;"></div>
<div style="left:1073px;top:342px;width:1px;height:408px;background:#fbfbfb;"></div>
<div style="left:1081px;top:360.5px;width:2px;height:247px;background:#666;"></div>
<div style="left:862.5px;top:346px;width:210px;height:19.5px;background:#b9d0ea;border-radius:6px 6px 0 0;"></div>
<svg style="left:867px;top:347px;" width="17" height="17" viewBox="0 0 17 17"><rect x=".5" y=".5" width="15.6" height="15.6" rx="2.2" fill="#ececec" stroke="#b0b0b0" stroke-width=".9"/><path d="M3 6.4Q6 3.6 9.4 6.4V11.6H3Z" fill="#d9b994" stroke="#7a6040" stroke-width=".8"/><path d="M4.8 6.4V11.6M7.2 6.4V11.6" stroke="#8a7050" stroke-width=".7"/><path d="M2.5 13.8H10M2.5 12.6V15M10 12.6V15" stroke="#555" stroke-width=".8" fill="none"/><path d="M12.8 4V12M11.6 4H14M11.6 12H14" stroke="#555" stroke-width=".8" fill="none"/></svg>
<span class="t" style="left:887.70px;top:348.74px;font-size:12px;color:#111;transform-origin:0 0;transform:scaleX(0.9169);">Dimensiones</span>
<svg style="left:1049px;top:345.7px;" width="20" height="20" viewBox="0 0 20 20"><defs><radialGradient id="cb346" cx="0.5" cy="0.4" r="0.6"><stop offset="0" stop-color="#fff"/><stop offset="0.75" stop-color="#fdfdfd"/><stop offset="1" stop-color="#d8d8d8"/></radialGradient></defs><circle cx="10" cy="10.2" r="8.3" fill="rgba(0,0,0,.18)"/><circle cx="9.7" cy="9.2" r="7.7" fill="url(#cb346)" stroke="#9a9a9a" stroke-width="0.9"/><path d="M6.5 8.6L9.7 5.6L12.9 8.6M6.5 12.8L9.7 9.8L12.9 12.8" fill="none" stroke="#1a2a6c" stroke-width="1.5"/></svg>
<div style="left:971px;top:368px;width:99px;height:19px;background:#fff;"></div>
<span class="t" style="left:881.20px;top:372.24px;font-size:12px;color:#111;transform-origin:0 0;transform:scaleX(0.8641);">Ancho</span>
<div style="left:875px;top:387px;width:195px;height:1px;background:#8c8c8c;"></div>
<div style="left:1053px;top:369px;width:16px;height:17px;background:#fdfdfd;border:1px solid #cfcfcf;border-radius:4px;"></div>
<span class="t" style="left:1058.30px;top:372.89px;font-size:11px;color:#1a2a6c;font-weight:700;">»</span>
<span class="t" style="left:975.00px;top:370.84px;font-size:12px;color:#111;transform-origin:0 0;transform:scaleX(0.8491);">875</span>
<div style="left:971px;top:388px;width:99px;height:19px;background:#fff;"></div>
<span class="t" style="left:881.20px;top:392.24px;font-size:12px;color:#111;transform-origin:0 0;transform:scaleX(0.8549);">Altura</span>
<div style="left:875px;top:407px;width:195px;height:1px;background:#8c8c8c;"></div>
<div style="left:1053px;top:389px;width:16px;height:17px;background:#fdfdfd;border:1px solid #cfcfcf;border-radius:4px;"></div>
<span class="t" style="left:1058.30px;top:392.89px;font-size:11px;color:#1a2a6c;font-weight:700;">»</span>
<span class="t" style="left:975.00px;top:390.84px;font-size:12px;color:#111;transform-origin:0 0;transform:scaleX(0.8691);">2000</span>
<div style="left:971px;top:408px;width:99px;height:19px;background:#fff;"></div>
<span class="t" style="left:881.20px;top:412.24px;font-size:12px;color:#111;transform-origin:0 0;transform:scaleX(0.8854);">Profundidad</span>
<div style="left:875px;top:427px;width:195px;height:1px;background:#8c8c8c;"></div>
<div style="left:1053px;top:409px;width:16px;height:17px;background:#fdfdfd;border:1px solid #cfcfcf;border-radius:4px;"></div>
<span class="t" style="left:1058.30px;top:412.89px;font-size:11px;color:#1a2a6c;font-weight:700;">»</span>
<span class="t" style="left:975.00px;top:410.84px;font-size:12px;color:#111;transform-origin:0 0;transform:scaleX(0.8491);">190</span>
<div style="left:971px;top:428px;width:99px;height:19px;background:#fff;"></div>
<span class="t" style="left:881.20px;top:432.24px;font-size:12px;color:#111;transform-origin:0 0;transform:scaleX(0.8572);">Escalar</span>
<div style="left:875px;top:447px;width:195px;height:1px;background:#8c8c8c;"></div>
<div style="left:970px;top:427px;width:100px;height:21px;background:#fff;border:1px solid #707070;"></div>
<svg style="left:1056px;top:434px;" width="11" height="8" viewBox="0 0 11 8"><path d="M1.2 1.5L5.3 5.6L9.4 1.5" fill="none" stroke="#444" stroke-width="1"/></svg>
<span class="t" style="left:975.60px;top:430.84px;font-size:12px;color:#111;transform-origin:0 0;transform:scaleX(0.8540);">No</span>
<div style="left:862.5px;top:454px;width:210px;height:19.5px;background:#b9d0ea;border-radius:6px 6px 0 0;"></div>
<span class="t" style="left:870.80px;top:456.74px;font-size:12px;color:#111;transform-origin:0 0;transform:scaleX(0.9127);">Medidas</span>
<svg style="left:1049px;top:453.7px;" width="20" height="20" viewBox="0 0 20 20"><defs><radialGradient id="cb454" cx="0.5" cy="0.4" r="0.6"><stop offset="0" stop-color="#fff"/><stop offset="0.75" stop-color="#fdfdfd"/><stop offset="1" stop-color="#d8d8d8"/></radialGradient></defs><circle cx="10" cy="10.2" r="8.3" fill="rgba(0,0,0,.18)"/><circle cx="9.7" cy="9.2" r="7.7" fill="url(#cb454)" stroke="#9a9a9a" stroke-width="0.9"/><path d="M6.5 8.6L9.7 5.6L12.9 8.6M6.5 12.8L9.7 9.8L12.9 12.8" fill="none" stroke="#1a2a6c" stroke-width="1.5"/></svg>
<div style="left:971px;top:476px;width:99px;height:19px;background:#fff;"></div>
<span class="t" style="left:881.20px;top:480.24px;font-size:12px;color:#111;transform-origin:0 0;transform:scaleX(0.8771);">Rotação Ripad...</span>
<div style="left:875px;top:495px;width:195px;height:1px;background:#8c8c8c;"></div>
<span class="t" style="left:975.00px;top:478.84px;font-size:12px;color:#111;">0</span>
<div style="left:862.5px;top:502px;width:210px;height:19.5px;background:#b9d0ea;border-radius:6px 6px 0 0;"></div>
<svg style="left:867px;top:503px;" width="17" height="17" viewBox="0 0 17 17"><rect x=".5" y=".5" width="15.6" height="15.6" rx="2.2" fill="#fbfbfb" stroke="#9a9a9a" stroke-width=".9"/><text x="1.8" y="11.6" font-family="Liberation Sans, sans-serif" font-size="9.5" fill="#222" textLength="12.6" lengthAdjust="spacingAndGlyphs">etc</text></svg>
<span class="t" style="left:887.60px;top:504.74px;font-size:12px;color:#111;transform-origin:0 0;transform:scaleX(0.9135);">Otras</span>
<svg style="left:1049px;top:501.7px;" width="20" height="20" viewBox="0 0 20 20"><defs><radialGradient id="cb502" cx="0.5" cy="0.4" r="0.6"><stop offset="0" stop-color="#fff"/><stop offset="0.75" stop-color="#fdfdfd"/><stop offset="1" stop-color="#d8d8d8"/></radialGradient></defs><circle cx="10" cy="10.2" r="8.3" fill="rgba(0,0,0,.18)"/><circle cx="9.7" cy="9.2" r="7.7" fill="url(#cb502)" stroke="#9a9a9a" stroke-width="0.9"/><path d="M6.5 8.6L9.7 5.6L12.9 8.6M6.5 12.8L9.7 9.8L12.9 12.8" fill="none" stroke="#1a2a6c" stroke-width="1.5"/></svg>
<div style="left:971px;top:524px;width:99px;height:19px;background:#fff;"></div>
<span class="t" style="left:881.20px;top:528.24px;font-size:12px;color:#111;transform-origin:0 0;transform:scaleX(0.8403);">Área</span>
<div style="left:970px;top:523px;width:100px;height:21px;background:#fff;border:1px solid #707070;"></div>
<svg style="left:1056px;top:530px;" width="11" height="8" viewBox="0 0 11 8"><path d="M1.2 1.5L5.3 5.6L9.4 1.5" fill="none" stroke="#444" stroke-width="1"/></svg>
<span class="t" style="left:975.60px;top:526.84px;font-size:12px;color:#111;transform-origin:0 0;transform:scaleX(0.8994);">Sin área</span>
<div style="left:971px;top:544px;width:99px;height:19px;background:#fff;"></div>
<span class="t" style="left:881.20px;top:548.24px;font-size:12px;color:#111;transform-origin:0 0;transform:scaleX(0.8418);">Capas</span>
<div style="left:875px;top:563px;width:195px;height:1px;background:#8c8c8c;"></div>
<div style="left:970px;top:543px;width:100px;height:21px;background:#fff;border:1px solid #707070;"></div>
<svg style="left:1056px;top:550px;" width="11" height="8" viewBox="0 0 11 8"><path d="M1.2 1.5L5.3 5.6L9.4 1.5" fill="none" stroke="#444" stroke-width="1"/></svg>
<span class="t" style="left:975.60px;top:546.84px;font-size:12px;color:#111;transform-origin:0 0;transform:scaleX(0.9205);">Default</span>
<div style="left:971px;top:564px;width:99px;height:19px;background:#fff;"></div>
<span class="t" style="left:881.20px;top:568.24px;font-size:12px;color:#111;transform-origin:0 0;transform:scaleX(0.8846);">Observaciones</span>
<div style="left:875px;top:583px;width:195px;height:1px;background:#8c8c8c;"></div>
<div style="left:1053px;top:565px;width:16px;height:17px;background:#fdfdfd;border:1px solid #cfcfcf;border-radius:4px;"></div>
<span class="t" style="left:1056.20px;top:568.69px;font-size:11px;color:#333;letter-spacing:0.066px;">...</span>
<div style="left:862.5px;top:590px;width:210px;height:19.5px;background:#b9d0ea;border-radius:6px 6px 0 0;"></div>
<span class="t" style="left:871.20px;top:592.74px;font-size:12px;color:#111;transform-origin:0 0;transform:scaleX(0.9316);">Perfurante</span>
<svg style="left:1049px;top:589.7px;" width="20" height="20" viewBox="0 0 20 20"><defs><radialGradient id="cb590" cx="0.5" cy="0.4" r="0.6"><stop offset="0" stop-color="#fff"/><stop offset="0.75" stop-color="#fdfdfd"/><stop offset="1" stop-color="#d8d8d8"/></radialGradient></defs><circle cx="10" cy="10.2" r="8.3" fill="rgba(0,0,0,.18)"/><circle cx="9.7" cy="9.2" r="7.7" fill="url(#cb590)" stroke="#9a9a9a" stroke-width="0.9"/><path d="M6.5 8.6L9.7 5.6L12.9 8.6M6.5 12.8L9.7 9.8L12.9 12.8" fill="none" stroke="#1a2a6c" stroke-width="1.5"/></svg>
<div style="left:971px;top:612px;width:99px;height:19px;background:#fff;"></div>
<span class="t" style="left:881.20px;top:616.24px;font-size:12px;color:#111;transform-origin:0 0;transform:scaleX(0.8702);">Perforación</span>
<div style="left:875px;top:631px;width:195px;height:1px;background:#8c8c8c;"></div>
<div style="left:970px;top:611px;width:100px;height:21px;background:#fff;border:1px solid #707070;"></div>
<svg style="left:1056px;top:618px;" width="11" height="8" viewBox="0 0 11 8"><path d="M1.2 1.5L5.3 5.6L9.4 1.5" fill="none" stroke="#444" stroke-width="1"/></svg>
<span class="t" style="left:975.60px;top:614.84px;font-size:12px;color:#111;transform-origin:0 0;transform:scaleX(0.8435);">Si</span>
<div style="left:971px;top:632px;width:99px;height:19px;background:#fff;"></div>
<span class="t" style="left:881.20px;top:636.24px;font-size:12px;color:#111;transform-origin:0 0;transform:scaleX(0.8854);">Profundidad</span>
<div style="left:875px;top:651px;width:195px;height:1px;background:#8c8c8c;"></div>
<span class="t" style="left:975.00px;top:634.84px;font-size:12px;color:#111;transform-origin:0 0;transform:scaleX(0.8491);">150</span>
<div style="left:862.5px;top:658px;width:210px;height:19.5px;background:#b9d0ea;border-radius:6px 6px 0 0;"></div>
<svg style="left:867px;top:659px;" width="17" height="17" viewBox="0 0 17 17"><rect x=".5" y=".5" width="15.6" height="15.6" rx="2.2" fill="#ececec" stroke="#b0b0b0" stroke-width=".9"/><rect x="5.4" y="5.6" width="6" height="5.6" rx="1" fill="#c9a682" stroke="#7a6040" stroke-width=".8"/><path d="M8.4 1.8V4.6M8.4 12.2V15M1.8 8.4H4.4M12.4 8.4H15M6.4 3H10.4M6.4 13.8H10.4M3 6.4V10.4M13.8 6.4V10.4" stroke="#666" stroke-width=".8" fill="none"/></svg>
<span class="t" style="left:887.60px;top:660.74px;font-size:12px;color:#111;letter-spacing:-0.237px;">Posición</span>
<svg style="left:1049px;top:657.7px;" width="20" height="20" viewBox="0 0 20 20"><defs><radialGradient id="cb658" cx="0.5" cy="0.4" r="0.6"><stop offset="0" stop-color="#fff"/><stop offset="0.75" stop-color="#fdfdfd"/><stop offset="1" stop-color="#d8d8d8"/></radialGradient></defs><circle cx="10" cy="10.2" r="8.3" fill="rgba(0,0,0,.18)"/><circle cx="9.7" cy="9.2" r="7.7" fill="url(#cb658)" stroke="#9a9a9a" stroke-width="0.9"/><path d="M6.5 8.6L9.7 5.6L12.9 8.6M6.5 12.8L9.7 9.8L12.9 12.8" fill="none" stroke="#1a2a6c" stroke-width="1.5"/></svg>
<div style="left:971px;top:680px;width:99px;height:19px;background:#fff;"></div>
<span class="t" style="left:881.20px;top:684.24px;font-size:12px;color:#111;transform-origin:0 0;transform:scaleX(0.8738);">Cota Anterior</span>
<div style="left:875px;top:699px;width:195px;height:1px;background:#8c8c8c;"></div>
<span class="t" style="left:975.00px;top:682.84px;font-size:12px;color:#111;transform-origin:0 0;transform:scaleX(0.8891);">625,5</span>
<div style="left:971px;top:700px;width:99px;height:19px;background:#fff;"></div>
<span class="t" style="left:881.20px;top:704.24px;font-size:12px;color:#111;transform-origin:0 0;transform:scaleX(0.8648);">Cota Inferior</span>
<div style="left:875px;top:719px;width:195px;height:1px;background:#8c8c8c;"></div>
<span class="t" style="left:975.00px;top:702.84px;font-size:12px;color:#111;">0</span>
<div style="left:971px;top:720px;width:99px;height:19px;background:#fff;"></div>
<span class="t" style="left:881.20px;top:724.24px;font-size:12px;color:#111;transform-origin:0 0;transform:scaleX(0.8631);">Cota Posterior</span>
<div style="left:875px;top:739px;width:195px;height:1px;background:#8c8c8c;"></div>
<span class="t" style="left:975.00px;top:722.84px;font-size:12px;color:#111;transform-origin:0 0;transform:scaleX(0.8891);">266,9</span>
<div style="left:971px;top:740px;width:99px;height:19px;background:#fff;"></div>
<span class="t" style="left:881.20px;top:744.24px;font-size:12px;color:#111;transform-origin:0 0;transform:scaleX(0.8806);">Cota Superior</span>
<span class="t" style="left:975.00px;top:742.84px;font-size:12px;color:#111;transform-origin:0 0;transform:scaleX(0.8491);">600</span>
<div style="left:859px;top:750px;width:234px;height:7px;background:#f4f4f4;"></div>
<div style="left:849px;top:750px;width:10px;height:7px;background:#f7f7f7;"></div>
<div style="left:1093px;top:750px;width:9px;height:7px;background:#f7f7f7;"></div>
<div style="left:848px;top:757px;width:255px;height:1px;background:#6e6e6e;"></div>
<div style="left:7px;top:763px;width:1101px;height:23px;background:#f8f8f8;"></div>
<svg style="left:8px;top:767px;" width="16" height="15" viewBox="0 0 16 15"><defs><radialGradient id="ginfo" cx=".4" cy=".3" r=".8"><stop offset="0" stop-color="#fff"/><stop offset=".6" stop-color="#e4ecf8"/><stop offset="1" stop-color="#b5c7e4"/></radialGradient></defs><circle cx="8" cy="7.3" r="6.8" fill="url(#ginfo)" stroke="#8ea6cf" stroke-width=".9"/><text x="5.9" y="11.3" font-family="Liberation Serif, serif" font-weight="700" font-size="11.5" fill="#1a2c8a">i</text></svg>
<span class="t" style="left:27.80px;top:770.04px;font-size:12px;color:#111;letter-spacing:-0.178px;">Para buscar el ítem que desea, utilice la herramienta Localizar Rápido.</span>
<svg style="left:703px;top:769px;" width="18" height="13" viewBox="0 0 18 13"><g fill="none" stroke="#111" stroke-width="1.2"><circle cx="5.2" cy="8" r="3"/><circle cx="13" cy="7.6" r="3"/><path d="M8.2 7.6Q9 6.6 10 7.2M2.6 6.6L1.6 2.2M15.6 6L17 3"/></g></svg>
<span class="t" style="left:723.50px;top:768.04px;font-size:12px;color:#111;letter-spacing:-0.045px;">Mostrar</span>
<svg style="left:769px;top:772px;" width="7" height="5" viewBox="0 0 7 5"><path d="M0.6 0.8H6.2L3.4 4Z" fill="#111"/></svg>
<div style="left:784px;top:764px;width:70px;height:20px;background:#fafbfd;border:1px solid #1f82e0;"></div>
<svg style="left:786px;top:766px;" width="17" height="17" viewBox="0 0 17 17"><rect x="1" y="1.6" width="3.2" height="13.8" fill="#f4f4f4" stroke="#555" stroke-width=".9"/><path d="M5.6 4.2H9.6V7H15V14.8H5.6Z" fill="#a9825a" stroke="#6e5030" stroke-width=".8"/><path d="M9.8 9.2H15M9.8 11.2H15M9.8 13.2H15" stroke="#f1e6d6" stroke-width=".8"/></svg>
<span class="t" style="left:805.60px;top:768.04px;font-size:12px;color:#111;letter-spacing:-0.098px;">Colisión</span>
<div style="left:859px;top:764px;width:107px;height:20px;background:#fafbfd;border:1px solid #1f82e0;"></div>
<svg style="left:860px;top:766px;" width="18" height="17" viewBox="0 0 18 17"><g fill="#b08a62" stroke="#6e5030" stroke-width=".7"><rect x="1" y="1" width="7.4" height="4.6"/><rect x="9.6" y="1" width="7.4" height="4.6"/><rect x="1" y="6.4" width="7.4" height="4.6"/><rect x="9.6" y="6.4" width="7.4" height="4.6"/><rect x="1" y="11.8" width="7.4" height="4.6"/><rect x="9.6" y="11.8" width="7.4" height="4.6"/></g><rect x="5.4" y="5" width="7.6" height="7.6" fill="#fff"/><path d="M9.2 5.6V12M6 8.8H12.4" stroke="#e01010" stroke-width="2.4"/></svg>
<span class="t" style="left:880.40px;top:768.04px;font-size:12px;color:#111;letter-spacing:0.058px;">Acoplamientos</span>
<svg style="left:974px;top:767px;" width="15" height="16" viewBox="0 0 15 16"><path d="M7.2 1V6.4" stroke="#c02020" stroke-width="1.1"/><path d="M5.4 5L7.2 9L9 5Q7.2 3.2 5.4 5Z" fill="#e03030"/><rect x="1" y="11.6" width="12.6" height="3.4" fill="#f6d98a" stroke="#b98a1e" stroke-width=".9"/><path d="M5 11.6V15M9.4 11.6V15" stroke="#b98a1e" stroke-width=".8"/></svg>
<span class="t" style="left:992.50px;top:768.04px;font-size:12px;color:#111;letter-spacing:-0.231px;">Auto Rebajar</span>
<svg style="left:1072px;top:764px;" width="20" height="20" viewBox="1072 764 20 20"><defs><radialGradient id="gwr" cx=".4" cy=".4" r=".7"><stop offset="0" stop-color="#fff"/><stop offset="1" stop-color="#c4c8d4"/></radialGradient><linearGradient id="gwh" x1="0" y1="0" x2="1" y2="1"><stop offset="0" stop-color="#ffc21a"/><stop offset="1" stop-color="#f08c00"/></linearGradient></defs><path d="M1079.8 771.6L1082.4 769.6L1089.6 776.6Q1090.6 778.6 1089 780.2Q1087.4 781.4 1085.6 780.2Z" fill="url(#gwh)" stroke="#d98a10" stroke-width=".6"/><path d="M1076 767.2Q1079 765.2 1081.6 767.6Q1083.4 769.6 1082.4 772L1080 774Q1076.6 774.6 1074.8 772.4Q1073.6 770.6 1074.2 768.6L1076.8 771L1078.6 769.6Z" fill="url(#gwr)" stroke="#b9bccb" stroke-width=".7"/></svg>
<svg style="left:1095px;top:773px;" width="11" height="11" viewBox="0 0 11 11"><g fill="#9a9a9a"><rect x="8" y="0.5" width="2" height="2"/><rect x="8" y="4.3" width="2" height="2"/><rect x="4.2" y="4.3" width="2" height="2"/><rect x="8" y="8.1" width="2" height="2"/><rect x="4.2" y="8.1" width="2" height="2"/><rect x="0.4" y="8.1" width="2" height="2"/></g></svg>
<div style="left:6px;top:6px;width:1103px;height:781px;border:1px solid #7d7d7d;border-radius:8px 8px 4px 7px;pointer-events:none;box-shadow:0 0 0 12px #fff;"></div>
</div></body></html>
